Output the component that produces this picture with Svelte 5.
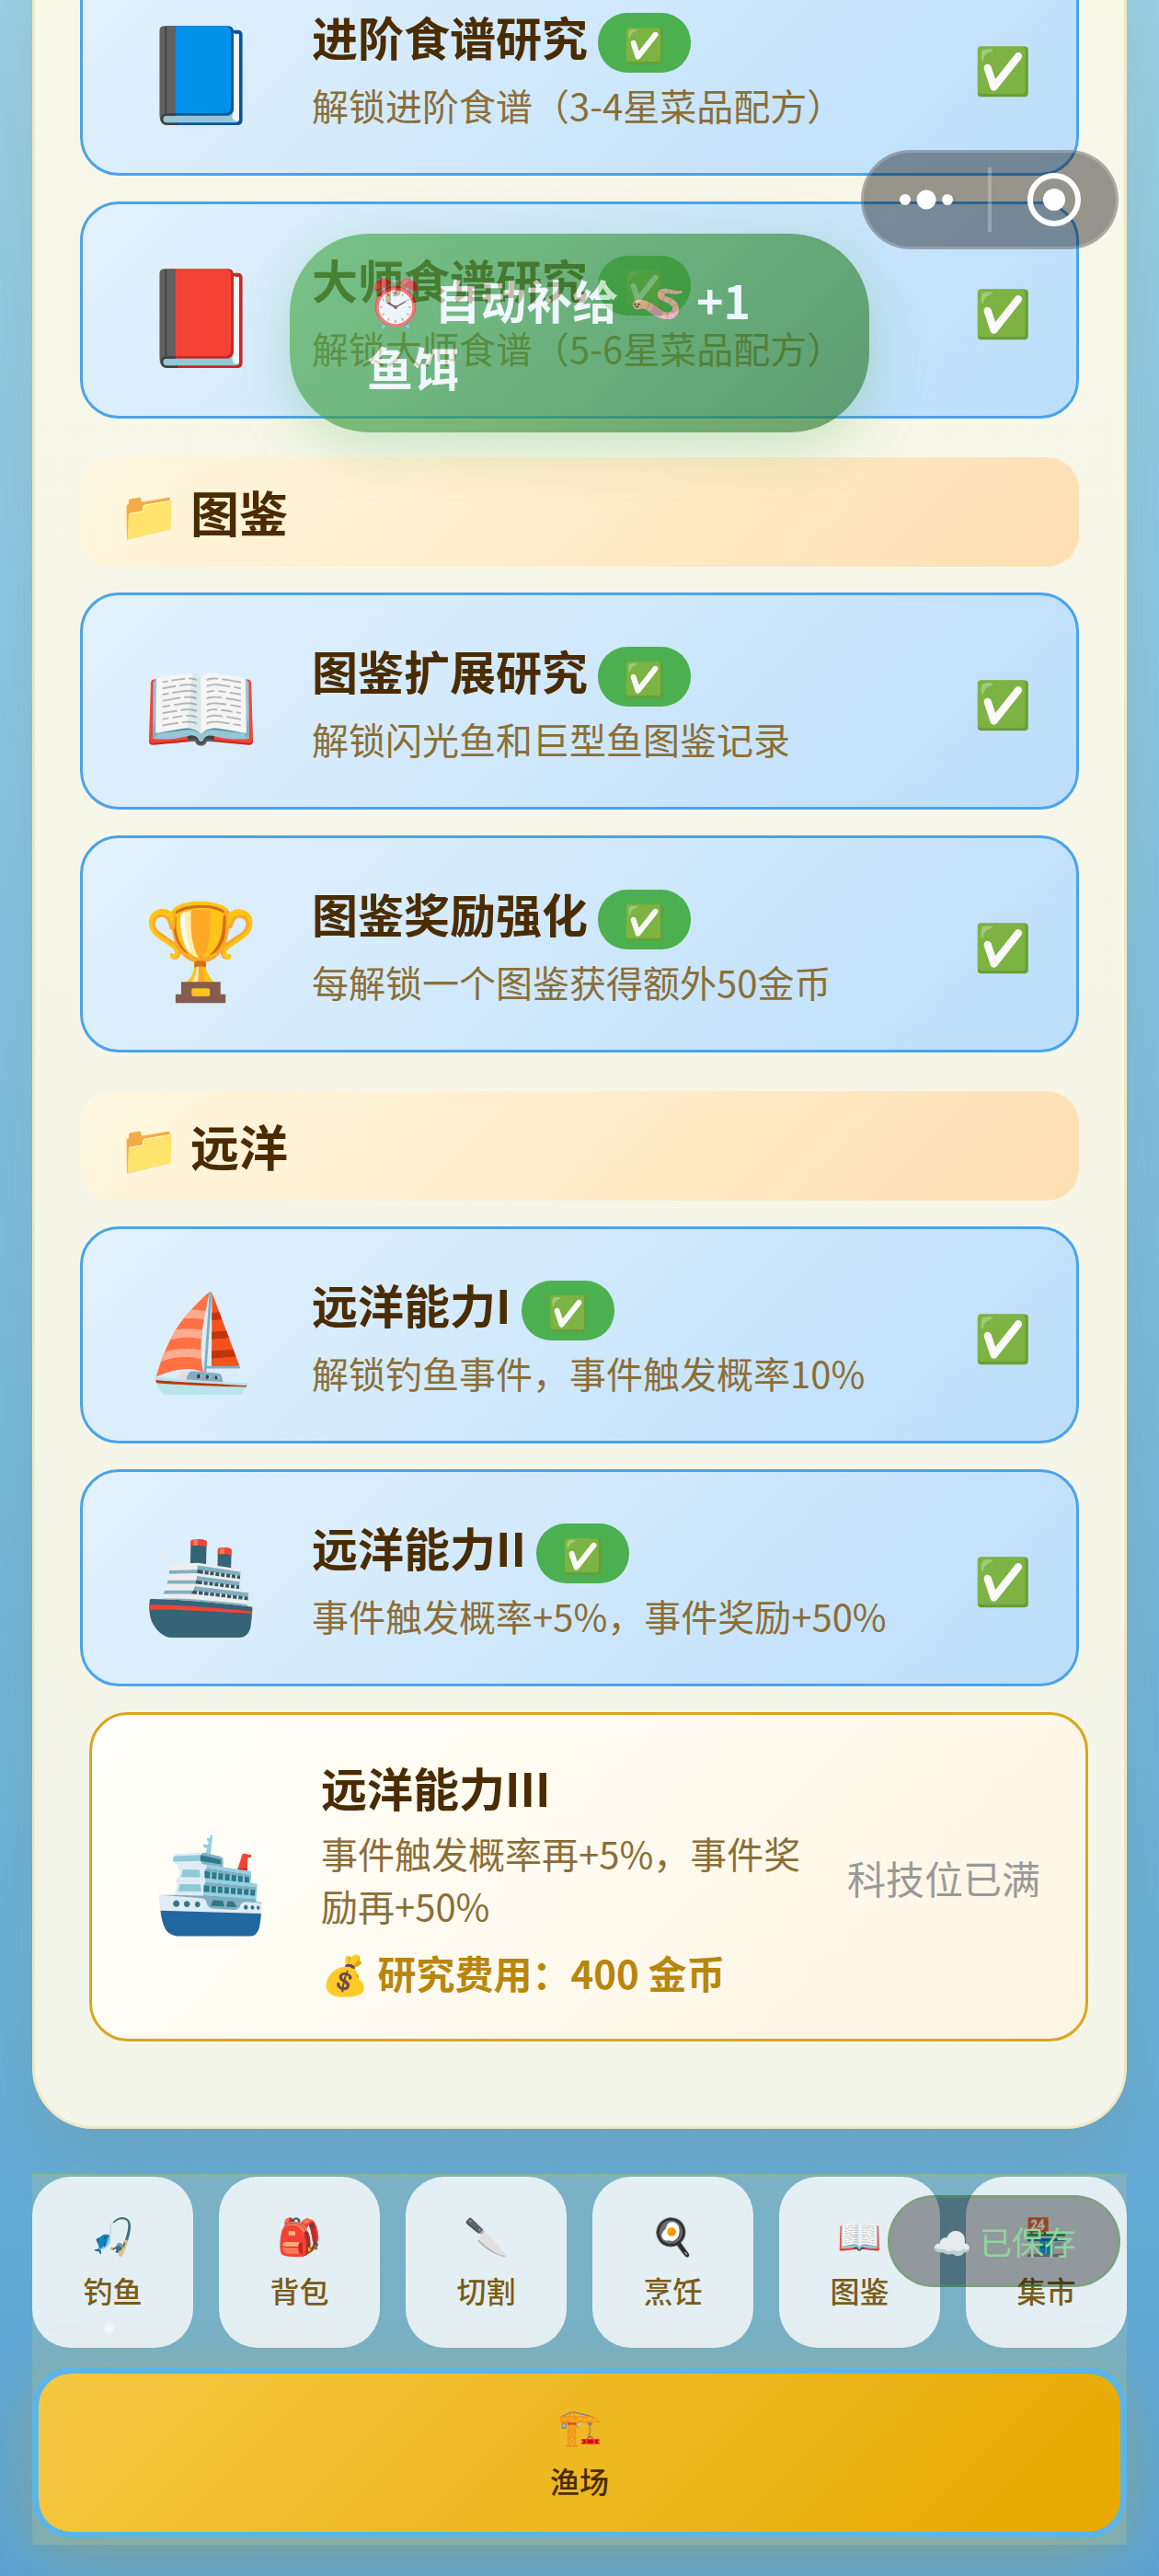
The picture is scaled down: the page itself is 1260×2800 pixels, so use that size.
<script>
  const completed = '✅';

  const groups = [
    {
      name: '',
      items: [
        {
          icon: '📘',
          title: '进阶食谱研究',
          desc: '解锁进阶食谱（3-4星菜品配方）',
          done: true,
        },
        {
          icon: '📕',
          title: '大师食谱研究',
          desc: '解锁大师食谱（5-6星菜品配方）',
          done: true,
        },
      ],
    },
    {
      name: '图鉴',
      items: [
        {
          icon: '📖',
          title: '图鉴扩展研究',
          desc: '解锁闪光鱼和巨型鱼图鉴记录',
          done: true,
        },
        {
          icon: '🏆',
          title: '图鉴奖励强化',
          desc: '每解锁一个图鉴获得额外50金币',
          done: true,
        },
      ],
    },
    {
      name: '远洋',
      items: [
        {
          icon: '⛵',
          title: '远洋能力I',
          desc: '解锁钓鱼事件，事件触发概率10%',
          done: true,
        },
        {
          icon: '🚢',
          title: '远洋能力II',
          desc: '事件触发概率+5%，事件奖励+50%',
          done: true,
        },
        {
          icon: '🛳️',
          title: '远洋能力III',
          desc: '事件触发概率再+5%，事件奖励再+50%',
          cost: 400,
          done: false,
        },
      ],
    },
  ];

  const tabs = [
    { icon: '🎣', label: '钓鱼' },
    { icon: '🎒', label: '背包' },
    { icon: '🔪', label: '切割' },
    { icon: '🍳', label: '烹饪' },
    { icon: '📖', label: '图鉴' },
    { icon: '🏪', label: '集市' },
    { icon: '🏗️', label: '渔场' },
  ];

  let activeTab = $state('渔场');
</script>

<div class="page">
  <main class="panel">
    {#each groups as group}
      <section>
        {#if group.name}
          <h2>📁 {group.name}</h2>
        {/if}
        {#each group.items as item}
          <article class="card" class:open={!item.done}>
            <span class="card-icon">{item.icon}</span>
            <div class="card-body">
              <h3>
                {item.title}
                {#if item.done}<span class="badge">{completed}</span>{/if}
              </h3>
              <p class="desc">{item.desc}</p>
              {#if item.cost}
                <p class="cost">💰 研究费用：{item.cost} 金币</p>
              {/if}
            </div>
            {#if item.done}
              <span class="state">{completed}</span>
            {:else}
              <span class="full">科技位已满</span>
            {/if}
          </article>
        {/each}
      </section>
    {/each}
  </main>

  <nav>
    {#each tabs as tab}
      <button
        class="tab"
        class:active={activeTab === tab.label}
        onclick={() => (activeTab = tab.label)}
      >
        <span class="tab-icon">{tab.icon}</span>
        <span>{tab.label}</span>
      </button>
    {/each}
  </nav>

  <span class="bubble"></span>

  <div class="toast" role="status">⏰ 自动补给 🪱 +1 鱼饵</div>

  <div class="capsule">
    <button aria-label="更多">
      <svg width="60" height="22" viewBox="0 0 60 22" fill="#fff">
        <circle cx="7" cy="11" r="6" />
        <circle cx="30" cy="11" r="10.5" />
        <circle cx="53" cy="11" r="6" />
      </svg>
    </button>
    <span class="divider"></span>
    <button aria-label="关闭">
      <svg width="60" height="60" viewBox="0 0 60 60">
        <circle cx="30" cy="30" r="26" fill="none" stroke="#fff" stroke-width="6" />
        <circle cx="30" cy="30" r="12" fill="#fff" />
      </svg>
    </button>
  </div>

  <div class="saved" role="status">☁️ 已保存</div>
</div>

<style>
  :global(body) {
    background: #5ca2cf;
  }

  .page {
    position: relative;
    overflow: hidden;
    padding: 0 35px 35px;
    background: linear-gradient(180deg, #98d0e8 0%, #83c2e2 35%, #66aed9 80%, #5ba2d0 100%);
    font-family: 'Noto Sans CJK SC', sans-serif;
    color: #4a2c00;
  }

  h2,
  h3,
  p {
    margin: 0;
  }

  button {
    border: none;
    background: none;
    font-family: inherit;
    cursor: pointer;
  }

  .panel {
    padding: 0 49px 64px;
    border: 3px solid #efe8c4;
    border-top: none;
    border-radius: 0 0 66px 66px;
    background: linear-gradient(180deg, #f8f8e9, #f3f5e8);
    box-shadow: 0 28px 84px rgba(139, 105, 20, 0.15);
  }

  /* the list is scrolled, so its first card starts above the screen */
  section:first-child {
    margin-top: -45px;
  }

  h2 {
    margin: 42px 0 28px;
    padding: 21px 42px;
    border-radius: 35px;
    background: linear-gradient(135deg, #fff8e1, #ffdfb2);
    font-size: 53px;
    line-height: 77px;
  }

  .card {
    display: flex;
    align-items: center;
    gap: 42px;
    margin-bottom: 28px;
    padding: 42px 49px;
    border: 3px solid #4aa3ec;
    border-radius: 42px;
    background: linear-gradient(135deg, #e3f2fd, #bbdefb);
  }

  .card.open {
    position: relative;
    left: 10px;
    border-color: #daa520;
    background: linear-gradient(135deg, #fffffb, #fef5e2);
  }

  .card-icon {
    display: flex;
    justify-content: center;
    width: 158px;
    font-size: 102px;
    line-height: 146px;
  }

  .card-body {
    flex: 1;
  }

  h3 {
    margin-bottom: 7px;
    font-size: 50px;
    line-height: 73px;
  }

  .badge {
    display: inline-block;
    padding: 7px 28px;
    border-radius: 32px;
    background: #4caf50;
    font-size: 36px;
    line-height: 51px;
    vertical-align: middle;
  }

  .desc {
    color: #8b6e37;
    font-size: 40px;
    line-height: 57px;
  }

  .cost {
    margin-top: 14px;
    color: #b8860b;
    font-size: 42px;
    font-weight: 600;
    line-height: 60px;
  }

  .state {
    font-size: 50px;
  }

  .full {
    color: #999;
    font-size: 42px;
    white-space: nowrap;
  }

  nav {
    display: grid;
    grid-template-columns: repeat(6, 1fr);
    gap: 21px 28px;
    margin-top: 49px;
    padding-bottom: 7px;
    border-top: 3px solid #8ab19f;
    background: linear-gradient(180deg, #7bb1c5, #74b0c6);
  }

  .tab {
    display: flex;
    flex-direction: column;
    align-items: center;
    gap: 10px;
    height: 186px;
    padding: 34px 0 0;
    border-radius: 42px;
    background: rgba(255, 255, 255, 0.8);
    color: #7a5c14;
    font-size: 32px;
    font-weight: 500;
    line-height: 46px;
  }

  .tab-icon {
    font-size: 39px;
    font-weight: 400;
    line-height: 56px;
  }

  .tab.active {
    grid-column: 1 / -1;
    padding-top: 27px;
    border: 7px solid #5db5e6;
    background: linear-gradient(135deg, #f5c842, #e6a800) padding-box;
    box-shadow: 0 14px 56px rgba(218, 165, 32, 0.35);
    color: #4a2c00;
  }

  .bubble {
    position: absolute;
    left: 113px;
    bottom: 265px;
    width: 11px;
    height: 11px;
    border-radius: 50%;
    background: rgba(255, 255, 255, 0.5);
  }

  .toast {
    position: absolute;
    top: 254px;
    left: 50%;
    box-sizing: border-box;
    width: 630px;
    padding: 35px 84px;
    border-radius: 86px;
    transform: translateX(-50%);
    background: linear-gradient(135deg, #4caf50, #2e7d32);
    box-shadow: 0 14px 56px rgba(76, 175, 80, 0.4);
    color: #fff;
    font-size: 50px;
    font-weight: 600;
    line-height: 73px;
    opacity: 0.68;
  }

  .capsule {
    position: absolute;
    top: 163px;
    right: 44px;
    display: flex;
    align-items: center;
    box-sizing: border-box;
    width: 280px;
    height: 108px;
    border: 3px solid rgba(255, 255, 255, 0.2);
    border-radius: 54px;
    background: rgba(0, 0, 0, 0.4);
  }

  .capsule button {
    display: flex;
    flex: 1;
    justify-content: center;
    padding: 0;
  }

  .divider {
    width: 4px;
    height: 70px;
    background: rgba(255, 255, 255, 0.25);
  }

  .saved {
    position: absolute;
    right: 42px;
    bottom: 315px;
    padding: 21px 45px;
    border: 3px solid rgba(76, 175, 80, 0.3);
    border-radius: 50px;
    background: rgba(0, 0, 0, 0.36);
    color: #90d4a0;
    font-size: 35px;
    line-height: 52px;
  }
</style>
